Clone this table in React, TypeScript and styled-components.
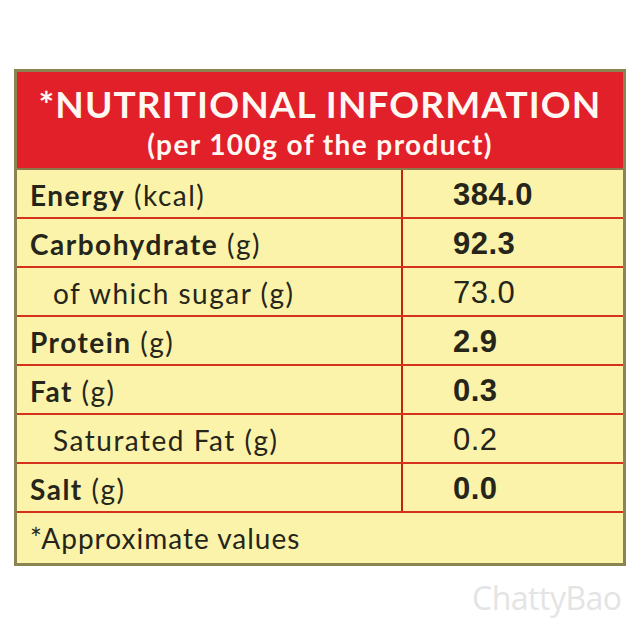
import React from "react";
import styled, { createGlobalStyle } from "styled-components";

const GlobalStyle = createGlobalStyle`
  html, body { margin: 0; padding: 0; background: #ffffff; }
  * { box-sizing: border-box; }
`;

const Page = styled.div`
  position: relative;
  width: 640px;
  height: 640px;
  padding: 69px 0 0 14px;
  background: #ffffff;
`;

const Panel = styled.div`
  width: 612px;
  border: 3px solid #8a8352;
  background: #fbf3a9;
  font-family: Lato, "Open Sans", sans-serif;
  color: #26251a;
`;

const Header = styled.div`
  height: 98px;
  background: #e1202a;
  border-bottom: 2px solid #8a7a4a;
  display: flex;
  flex-direction: column;
  align-items: center;
  justify-content: center;
  color: #fff8f2;
  font-weight: 700;
`;

const Title = styled.div`
  font-size: 37px;
  line-height: 42px;
  letter-spacing: 1.1px;
  padding-top: 2px;
`;

const Subtitle = styled.div`
  font-size: 28px;
  line-height: 32px;
  letter-spacing: 1.4px;
  margin-top: 3px;
`;

const Row = styled.div`
  display: grid;
  grid-template-columns: 386px 1fr;
  height: 49px;
  border-bottom: 2px solid #d5321c;
`;

const Label = styled.div<{ $indent?: boolean }>`
  border-right: 2px solid #c22414;
  padding-left: ${(p) => (p.$indent ? "36px" : "13px")};
  padding-top: 5px;
  font-size: 28px;
  line-height: 40px;
  letter-spacing: 1.5px;
  font-weight: 400;
  white-space: nowrap;
`;

const Strong = styled.span`
  font-weight: 700;
`;

const Value = styled.div<{ $bold?: boolean }>`
  padding-left: 50px;
  padding-top: 5px;
  line-height: 40px;
  font-family: "Liberation Sans", Arial, sans-serif;
  font-size: 31px;
  letter-spacing: 0.5px;
  font-weight: ${(p) => (p.$bold ? 700 : 400)};
`;

const Footer = styled.div`
  height: 50px;
  padding-left: 13px;
  padding-top: 5px;
  line-height: 40px;
  font-size: 28px;
  letter-spacing: 1px;
`;

const Watermark = styled.div`
  position: absolute;
  left: 472px;
  top: 576px;
  font-family: "Open Sans", sans-serif;
  font-size: 32px;
  color: #e4e4e4;
  letter-spacing: -0.5px;
`;

type Item = { name: string; unit: string; value: string; bold: boolean };

const items: Item[] = [
  { name: "Energy", unit: "(kcal)", value: "384.0", bold: true },
  { name: "Carbohydrate", unit: "(g)", value: "92.3", bold: true },
  { name: "of which sugar", unit: "(g)", value: "73.0", bold: false },
  { name: "Protein", unit: "(g)", value: "2.9", bold: true },
  { name: "Fat", unit: "(g)", value: "0.3", bold: true },
  { name: "Saturated Fat", unit: "(g)", value: "0.2", bold: false },
  { name: "Salt", unit: "(g)", value: "0.0", bold: true },
];

export default function App() {
  return (
    <>
      <GlobalStyle />
      <Page>
        <Panel>
          <Header>
            <Title>*NUTRITIONAL INFORMATION</Title>
            <Subtitle>(per 100g of the product)</Subtitle>
          </Header>
          {items.map((it) => (
            <Row key={it.name}>
              <Label $indent={!it.bold}>
                {it.bold ? <Strong>{it.name}</Strong> : it.name}
                {" " + it.unit}
              </Label>
              <Value $bold={it.bold}>{it.value}</Value>
            </Row>
          ))}
          <Footer>*Approximate values</Footer>
        </Panel>
        <Watermark>ChattyBao</Watermark>
      </Page>
    </>
  );
}
